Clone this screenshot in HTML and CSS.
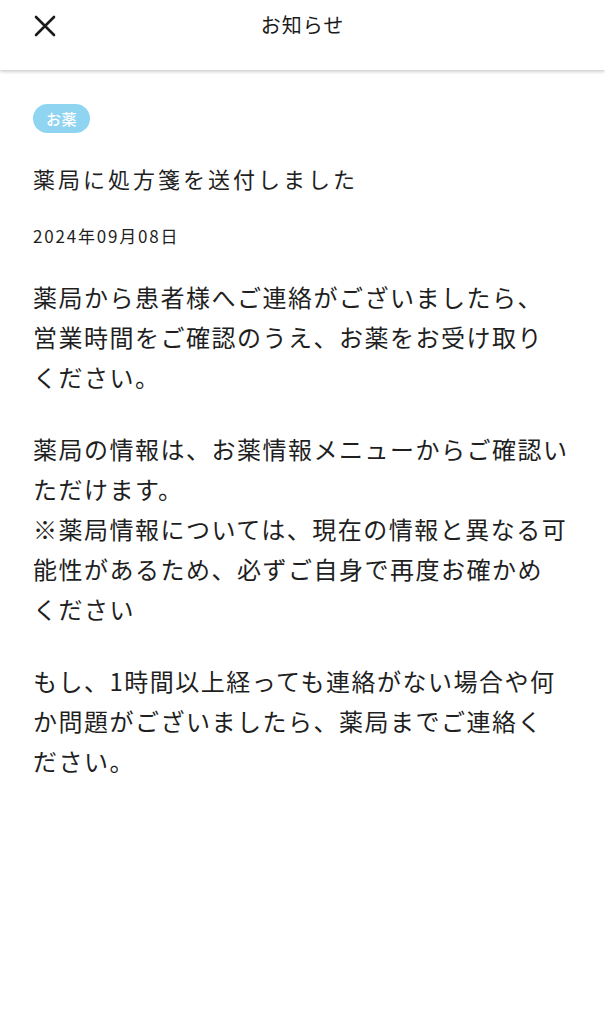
FILE: index.html
```html
<!DOCTYPE html>
<html lang="ja">
<head>
<meta charset="utf-8">
<title>お知らせ</title>
<link rel="stylesheet" href="styles.css">
</head>
<body>
<header class="header">
  <button class="close" aria-label="閉じる">
    <svg width="22" height="22" viewBox="0 0 22 22"><path d="M2 2 L20 20 M20 2 L2 20" stroke="#1a1a1a" stroke-width="2.6" stroke-linecap="round" fill="none"/></svg>
  </button>
  <h1 class="header-title">お知らせ</h1>
</header>
<main class="content">
  <span class="tag">お薬</span>
  <h2 class="title">薬局に処方箋を送付しました</h2>
  <p class="date">2024年09月08日</p>
  <p class="para">薬局から患者様へご連絡がございましたら、<br>営業時間をご確認のうえ、お薬をお受け取り<br>ください。</p>
  <p class="para">薬局の情報は、お薬情報メニューからご確認い<br>ただけます。<br>※薬局情報については、現在の情報と異なる可<br>能性があるため、必ずご自身で再度お確かめ<br>ください</p>
  <p class="para">もし、1時間以上経っても連絡がない場合や何<br>か問題がございましたら、薬局までご連絡く<br>ださい。</p>
</main>
</body>
</html>
```

FILE: styles.css
```css
* { box-sizing: border-box; }
html, body {
  margin: 0;
  padding: 0;
  background: #ffffff;
}
body {
  font-family: "Noto Sans CJK JP", "Noto Sans", sans-serif;
  color: #1f1f1f;
  width: 605px;
}
.header {
  height: 70px;
  display: flex;
  align-items: center;
  justify-content: center;
  position: relative;
  background: #fff;
  box-shadow: 0 2px 3px rgba(0,0,0,0.18);
}
.close {
  position: absolute;
  left: 34px;
  top: 15px;
  width: 22px;
  height: 22px;
  padding: 0;
  border: 0;
  background: none;
  display: block;
}
.close svg { display: block; }
.header-title {
  margin: 0;
  font-size: 20px;
  font-weight: 400;
  line-height: 24px;
  letter-spacing: 1px;
  align-self: flex-start;
  margin-top: 13px;
  color: #1a1a1a;
}
.content {
  padding: 34px 33px 0;
  display: flex;
  flex-direction: column;
  align-items: flex-start;
}
.tag {
  display: inline-flex;
  align-items: center;
  justify-content: center;
  width: 57px;
  height: 29px;
  border-radius: 15px;
  background: #8fd4f1;
  color: #fff;
  font-size: 15px;
  font-weight: 500;
  letter-spacing: 0.5px;
}
.title {
  margin: 29px 0 0;
  font-size: 22px;
  font-weight: 400;
  line-height: 32px;
  letter-spacing: 3px;
}
.date {
  margin: 30px 0 0;
  font-size: 17px;
  line-height: 24px;
  letter-spacing: 1.8px;
}
.para {
  margin: 29px 0 0;
  font-size: 24px;
  line-height: 40px;
  letter-spacing: 1.5px;
  white-space: nowrap;
}
.para + .para { margin-top: 32px; }
```
